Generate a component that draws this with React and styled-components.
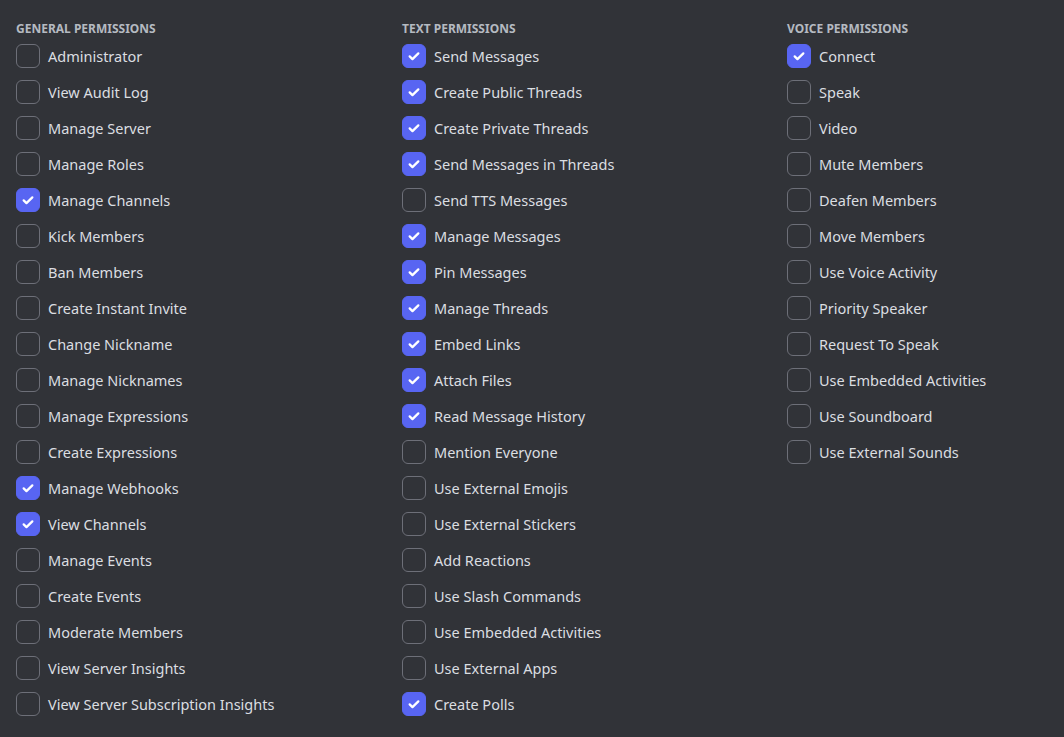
import React from "react";
import styled, { createGlobalStyle } from "styled-components";

const GlobalStyle = createGlobalStyle`
  html, body {
    margin: 0;
    padding: 0;
    background: #313338;
  }
  body {
    font-family: "Noto Sans", "Open Sans", sans-serif;
  }
`;

const groups = [
  {
    title: "General Permissions",
    items: [
      ["Administrator", false],
      ["View Audit Log", false],
      ["Manage Server", false],
      ["Manage Roles", false],
      ["Manage Channels", true],
      ["Kick Members", false],
      ["Ban Members", false],
      ["Create Instant Invite", false],
      ["Change Nickname", false],
      ["Manage Nicknames", false],
      ["Manage Expressions", false],
      ["Create Expressions", false],
      ["Manage Webhooks", true],
      ["View Channels", true],
      ["Manage Events", false],
      ["Create Events", false],
      ["Moderate Members", false],
      ["View Server Insights", false],
      ["View Server Subscription Insights", false],
    ],
  },
  {
    title: "Text Permissions",
    items: [
      ["Send Messages", true],
      ["Create Public Threads", true],
      ["Create Private Threads", true],
      ["Send Messages in Threads", true],
      ["Send TTS Messages", false],
      ["Manage Messages", true],
      ["Pin Messages", true],
      ["Manage Threads", true],
      ["Embed Links", true],
      ["Attach Files", true],
      ["Read Message History", true],
      ["Mention Everyone", false],
      ["Use External Emojis", false],
      ["Use External Stickers", false],
      ["Add Reactions", false],
      ["Use Slash Commands", false],
      ["Use Embedded Activities", false],
      ["Use External Apps", false],
      ["Create Polls", true],
    ],
  },
  {
    title: "Voice Permissions",
    items: [
      ["Connect", true],
      ["Speak", false],
      ["Video", false],
      ["Mute Members", false],
      ["Deafen Members", false],
      ["Move Members", false],
      ["Use Voice Activity", false],
      ["Priority Speaker", false],
      ["Request To Speak", false],
      ["Use Embedded Activities", false],
      ["Use Soundboard", false],
      ["Use External Sounds", false],
    ],
  },
];

function Check() {
  return (
    <svg width="16" height="16" viewBox="0 0 24 24" fill="none">
      <path
        d="M5.5 12.5l4.2 4.2L18.5 8"
        stroke="#fff"
        strokeWidth="3.4"
        strokeLinecap="round"
        strokeLinejoin="round"
      />
    </svg>
  );
}

function PermissionGroup({ title, items }) {
  return (
    <Column>
      <Heading>{title}</Heading>
      <List>
        {items.map(([label, checked]) => (
          <Row key={label}>
            <Box $checked={checked}>{checked && <Check />}</Box>
            <Label>{label}</Label>
          </Row>
        ))}
      </List>
    </Column>
  );
}

export default function App() {
  return (
    <>
      <GlobalStyle />
      <Page>
        {groups.map((g) => (
          <PermissionGroup key={g.title} title={g.title} items={g.items} />
        ))}
      </Page>
    </>
  );
}

const Page = styled.div`
  display: grid;
  grid-template-columns: 386px 385px 1fr;
  padding: 21px 0 0 16px;
  height: 737px;
  box-sizing: border-box;
  overflow: hidden;
`;

const Column = styled.div`
  display: flex;
  flex-direction: column;
`;

const Heading = styled.h3`
  margin: 0 0 8px;
  font-size: 12px;
  line-height: 15px;
  font-weight: 700;
  text-transform: uppercase;
  color: #b5bac1;
`;

const List = styled.div`
  display: flex;
  flex-direction: column;
  gap: 12px;
`;

const Row = styled.label`
  display: flex;
  align-items: center;
  gap: 8px;
  height: 24px;
`;

const Box = styled.span`
  width: 24px;
  height: 24px;
  box-sizing: border-box;
  border-radius: 6px;
  display: flex;
  align-items: center;
  justify-content: center;
  flex-shrink: 0;
  background: ${(p) => (p.$checked ? "#5865f2" : "transparent")};
  border: 1px solid ${(p) => (p.$checked ? "#5865f2" : "#6d6f78")};
`;

const Label = styled.span`
  font-size: 14.5px;
  line-height: 20px;
  color: #dbdee1;
`;
